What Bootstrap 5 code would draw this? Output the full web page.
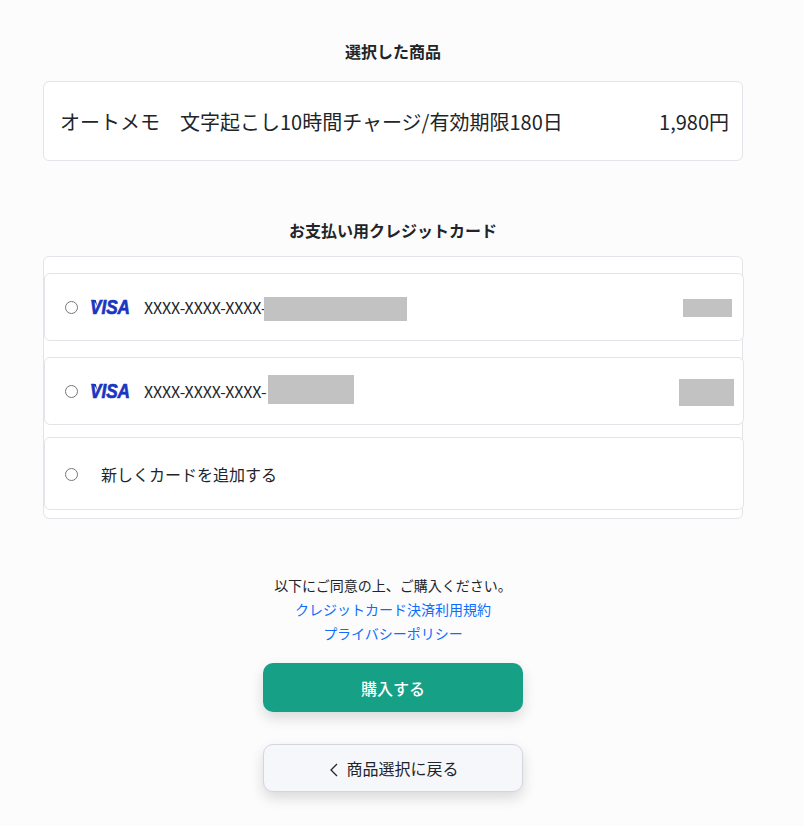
<!DOCTYPE html>
<html lang="ja">
<head>
<meta charset="utf-8">
<title>購入確認</title>
<link rel="stylesheet" href="https://cdn.jsdelivr.net/npm/bootstrap@5.3.0/dist/css/bootstrap.min.css">
<style>
html,body{height:826px;overflow:hidden}
body{background:#fcfcfc;color:#212529;font-family:"Noto Sans CJK JP","Noto Sans",sans-serif;font-size:14px}
.page-wrap{width:700px;margin-left:43px;padding-top:40px}
.sec-title{font-size:16px;font-weight:700;line-height:22px;margin:0;text-align:center;color:#212529}
.box-line{border:1px solid #e3e3ea;border-radius:6px;background:#fff}
.product-box{height:80px;margin-top:19px;padding:2px 13px 0 16px;font-size:20px;line-height:28px}
.card-title-gap{margin-top:58px}
.pay-box{height:263px;margin-top:15px;padding-top:16px}
.pay-row{width:700px;background:#fff;border:1px solid #e3e3ea;border-radius:6px;padding-left:20px;height:68px}
.pay-row+.pay-row{margin-top:16px}
.pay-row.pay-new{height:73px;margin-top:12px}
.radio-dot{width:13px;height:13px;margin:0;flex:none;accent-color:#6c757d}
.pay-new .radio-dot{margin-top:1px}
.visa-mark{width:42px;height:18px;margin-left:11px;flex:none;display:block;overflow:visible}
.visa-word{font:italic 700 20px "Liberation Sans",sans-serif;fill:#1a35c0;stroke:#1a35c0;stroke-width:.7px}
.card-num{margin-left:13px;font-size:16px;line-height:20px;letter-spacing:-.13px;white-space:nowrap}
.mask{background:#c2c2c2;flex:none;display:block}
.mask-a{width:143px;height:24px;margin-left:-2px;margin-top:4px}
.mask-b{width:86px;height:29px;margin-left:2px;margin-top:-4px}
.mask-r1{width:49px;height:18px;margin-left:auto;margin-right:11px;margin-top:1px}
.mask-r2{width:55px;height:27px;margin-left:auto;margin-right:9px;margin-top:3px}
.new-label{margin-left:23px;font-size:16px}
.agree{margin-top:54px;text-align:center;font-size:14px;line-height:24px}
.agree a{color:#0d6efd;text-decoration:none;display:block}
.btn-area{width:260px;margin:18px auto 0}
.buy-btn,.back-btn{display:block;width:260px;border-radius:10px;font-size:16px;box-shadow:0 6px 14px rgba(0,0,0,.14)}
.buy-btn{height:49px;background:#16a085;border:0;color:#fff;font-weight:500}
.buy-btn:hover{background:#16a085;color:#fff}
.back-btn{height:48px;margin-top:32px;padding-left:14px;background:#f6f7fb;border:1px solid #d5d5df;color:#212529}
.back-btn:hover{background:#f6f7fb;color:#212529}
.back-arrow{width:10px;height:14px;margin-right:7px;vertical-align:-2px}
</style>
</head>
<body>
<div class="page-wrap">
  <h2 class="sec-title">選択した商品</h2>
  <div class="box-line product-box d-flex justify-content-between align-items-center">
    <span>オートメモ　文字起こし10時間チャージ/有効期限180日</span>
    <span>1,980円</span>
  </div>

  <h2 class="sec-title card-title-gap">お支払い用クレジットカード</h2>
  <div class="box-line pay-box">
    <label class="pay-row d-flex align-items-center">
      <input class="radio-dot" type="radio" name="card">
      <svg class="visa-mark" viewBox="0 0 42 18" aria-label="VISA"><path d="M0 2C4 2 7 4.500 8.500 9L6.800 2Z" fill="#1a35c0"/><text class="visa-word" x="1" y="15.500" textLength="40" lengthAdjust="spacingAndGlyphs">VISA</text></svg>
      <span class="card-num">XXXX-XXXX-XXXX-</span>
      <span class="mask mask-a"></span>
      <span class="mask mask-r1"></span>
    </label>
    <label class="pay-row d-flex align-items-center">
      <input class="radio-dot" type="radio" name="card">
      <svg class="visa-mark" viewBox="0 0 42 18" aria-label="VISA"><path d="M0 2C4 2 7 4.500 8.500 9L6.800 2Z" fill="#1a35c0"/><text class="visa-word" x="1" y="15.500" textLength="40" lengthAdjust="spacingAndGlyphs">VISA</text></svg>
      <span class="card-num">XXXX-XXXX-XXXX-</span>
      <span class="mask mask-b"></span>
      <span class="mask mask-r2"></span>
    </label>
    <label class="pay-row pay-new d-flex align-items-center">
      <input class="radio-dot" type="radio" name="card">
      <span class="new-label">新しくカードを追加する</span>
    </label>
  </div>

  <div class="agree">
    <div>以下にご同意の上、ご購入ください。</div>
    <a href="#">クレジットカード決済利用規約</a>
    <a href="#">プライバシーポリシー</a>
  </div>

  <div class="btn-area">
    <button type="button" class="btn buy-btn">購入する</button>
    <button type="button" class="btn back-btn"><svg class="back-arrow" viewBox="0 0 10 14"><path d="M8 1 2 7l6 6" fill="none" stroke="#212529" stroke-width="1.300"/></svg>商品選択に戻る</button>
  </div>
</div>
<script src="https://cdn.jsdelivr.net/npm/bootstrap@5.3.0/dist/js/bootstrap.bundle.min.js"></script>
</body>
</html>
